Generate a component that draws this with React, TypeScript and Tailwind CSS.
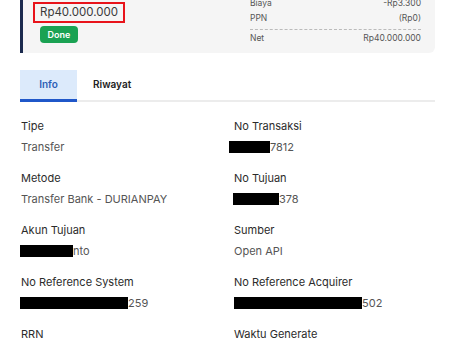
import React, { useState } from 'react';

type Field = { label: string; value: string; mask?: number; shift?: number };

const fields: Field[] = [
  { label: 'Tipe', value: 'Transfer' },
  { label: 'No Transaksi', value: '7812', mask: 41, shift: 5 },
  { label: 'Metode', value: 'Transfer Bank - DURIANPAY' },
  { label: 'No Tujuan', value: '378', mask: 46, shift: 1 },
  { label: 'Akun Tujuan', value: 'nto', mask: 53, shift: 1 },
  { label: 'Sumber', value: 'Open API' },
  { label: 'No Reference System', value: '259', mask: 108, shift: 1 },
  { label: 'No Reference Acquirer', value: '502', mask: 128 },
  { label: 'RRN', value: '' },
  { label: 'Waktu Generate', value: '' },
];

const FeeRow = ({ label, value }: { label: string; value: string }) => (
  <div className="flex h-[15px] items-center justify-between">
    <span>{label}</span>
    <span>{value}</span>
  </div>
);

export default function App() {
  const [tab, setTab] = useState('info');

  return (
    <div className="h-[341px] overflow-hidden bg-white font-['Inter',sans-serif] text-[#333]">
      {/* summary card, its top is scrolled out of view */}
      <div className="ml-5 mr-[19px] -mt-[30px] flex rounded-br-md border-l-[3px] border-[#1b2a4e] bg-[#f5f5f5] pb-[7px] pl-[17px] pr-[14px] pt-[10px]">
        <div className="flex flex-1 flex-col items-start pt-[22px]">
          <div className="-ml-[7px] border-2 border-[#e8141b] px-[5px] text-[11.5px] leading-[17px] text-[#3a3a3a]">
            Rp40.000.000
          </div>
          <div className="mt-[3px] flex h-[17px] w-[38px] items-center justify-center rounded-[4px] bg-[#1aa253] text-[9px] font-semibold text-white">
            Done
          </div>
        </div>
        <div className="w-[171px] shrink-0 pt-[1px] text-[8.5px] text-[#555]">
          <FeeRow label="Nominal" value="Rp40.003.300" />
          <FeeRow label="Biaya" value="-Rp3.300" />
          <FeeRow label="PPN" value="(Rp0)" />
          <div className="mt-[3px] border-t border-dashed border-[#bbb] pt-[1px]">
            <FeeRow label="Net" value="Rp40.000.000" />
          </div>
        </div>
      </div>

      {/* tabs */}
      <div className="ml-5 mr-[19px] mt-[17px] flex border-b-2 border-[#ececec] text-[10px] font-semibold">
        <button
          onClick={() => setTab('info')}
          className={`-mb-[2px] h-[32px] w-[57px] border-b-[3px] ${
            tab === 'info' ? 'border-[#1f57c9] bg-[#dceafb] text-[#2d5fb6]' : 'border-transparent text-[#222]'
          }`}
        >
          Info
        </button>
        <button
          onClick={() => setTab('riwayat')}
          className={`-mb-[2px] h-[32px] px-4 border-b-[3px] ${
            tab === 'riwayat' ? 'border-[#1f57c9] bg-[#dceafb] text-[#2d5fb6]' : 'border-transparent text-[#222]'
          }`}
        >
          Riwayat
        </button>
      </div>

      {/* details */}
      <div className="ml-[21px] mr-5 mt-[14px] grid grid-cols-[213px_1fr] gap-y-[11px] text-[11px]">
        {fields.map((f) => (
          <div key={f.label}>
            <div className="leading-[20px] text-[#2b2b2b]">{f.label}</div>
            <div className="mt-[1px] flex h-[20px] items-center text-[#555]">
              {f.mask ? (
                <span
                  className="inline-block h-[12px] bg-black"
                  style={{ width: f.mask, marginLeft: -(f.shift ?? 0) }}
                />
              ) : null}
              {f.value}
            </div>
          </div>
        ))}
      </div>
    </div>
  );
}
